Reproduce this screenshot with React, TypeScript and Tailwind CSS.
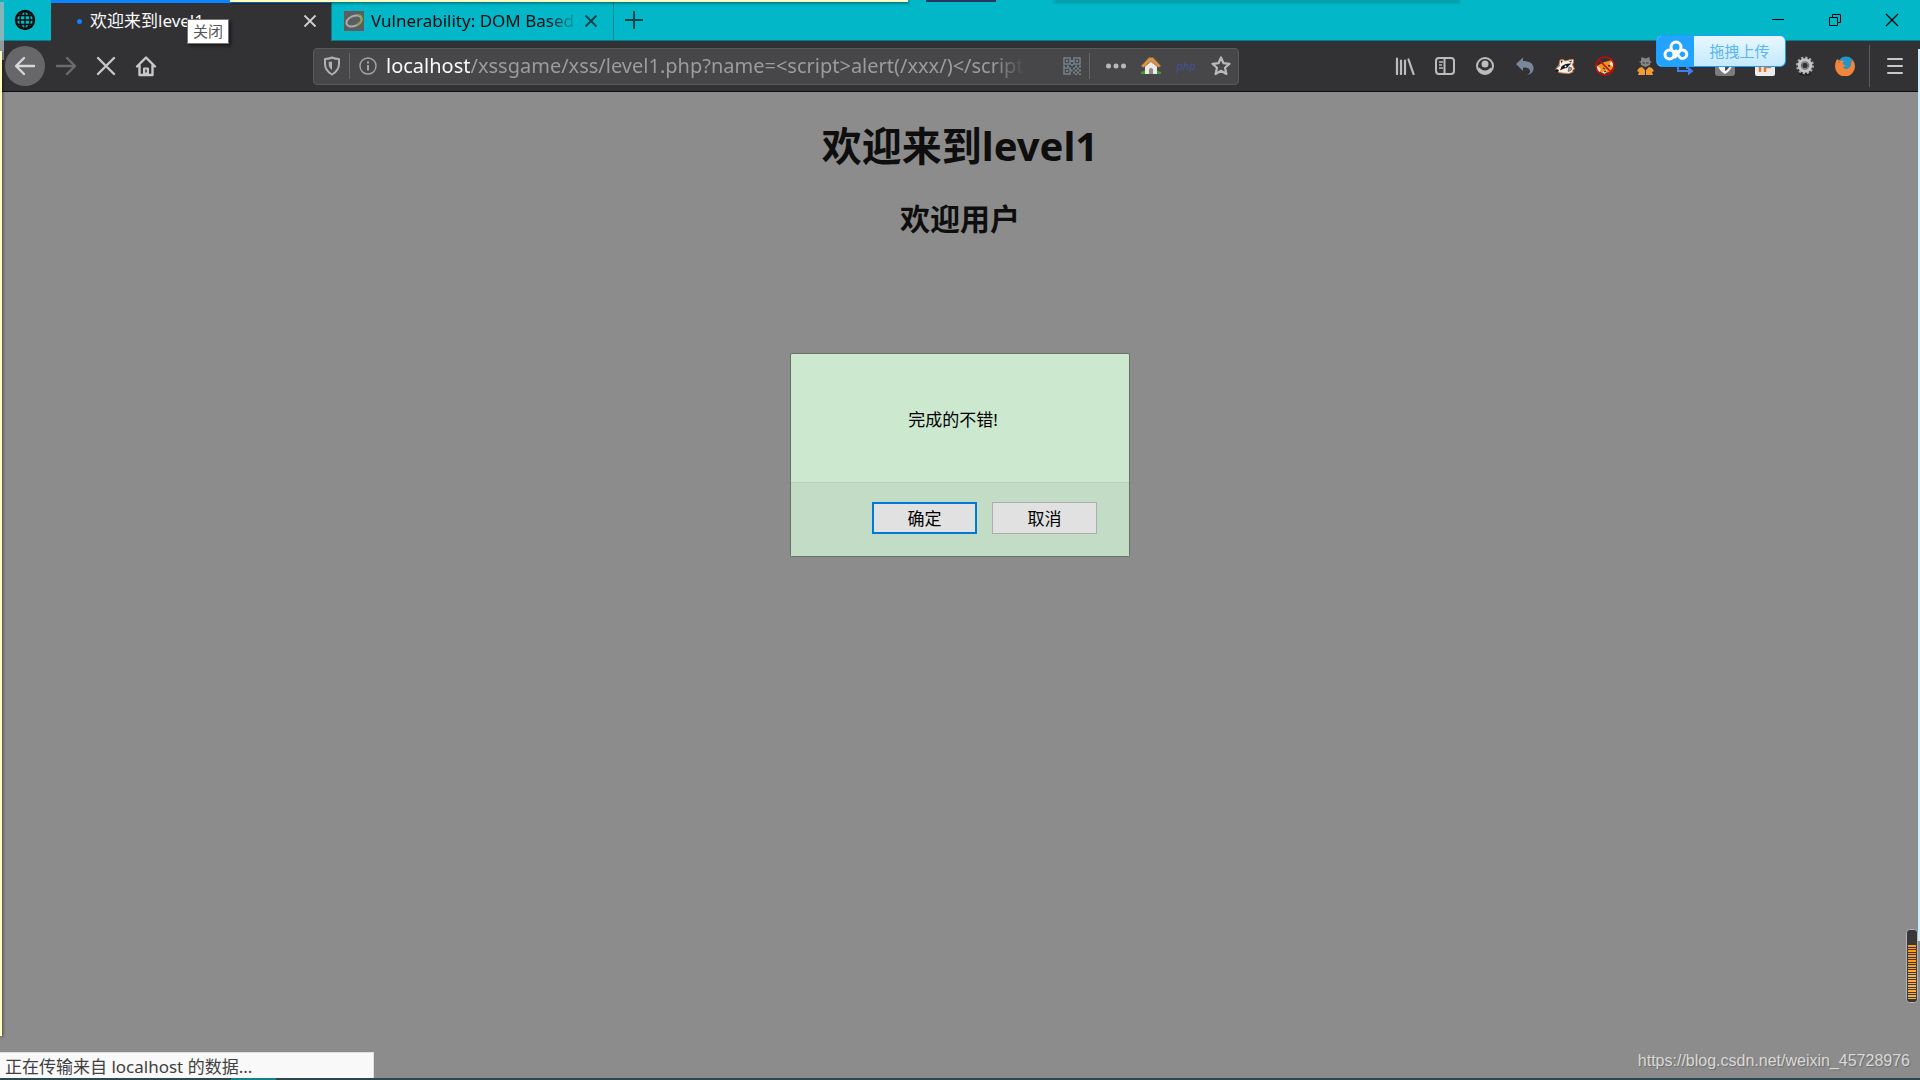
import type { ReactNode } from "react";

function GlobeIcon() {
  return (
    <svg width="22" height="22" viewBox="0 0 22 22" fill="none" stroke="#0c0c0d" strokeWidth="1.5">
      <circle cx="11" cy="11" r="9" strokeWidth="2.4" />
      <ellipse cx="11" cy="11" rx="5" ry="9" />
      <path d="M11 2v18M2 11h18M4 6.5h14M4 15.5h14" strokeWidth="1.3" />
    </svg>
  );
}

function CloseIcon({ color }: { color: string }) {
  return (
    <svg width="14" height="14" viewBox="0 0 14 14" stroke={color} strokeWidth="1.8">
      <path d="M1.5 1.5l11 11M12.5 1.5l-11 11" />
    </svg>
  );
}

function BackIcon() {
  return (
    <svg width="22" height="20" viewBox="0 0 22 20" fill="none" stroke="#d7d7d8" strokeWidth="2.4" strokeLinecap="round" strokeLinejoin="round">
      <path d="M20 10H2.5M10 2l-8 8 8 8" />
    </svg>
  );
}

function ForwardIcon() {
  return (
    <svg width="22" height="20" viewBox="0 0 22 20" fill="none" stroke="#6b6b6d" strokeWidth="2.4" strokeLinecap="round" strokeLinejoin="round">
      <path d="M2 10h17.5M12 2l8 8-8 8" />
    </svg>
  );
}

function StopIcon() {
  return (
    <svg width="20" height="20" viewBox="0 0 20 20" stroke="#c8c8c9" strokeWidth="2.4" strokeLinecap="round">
      <path d="M2 2l16 16M18 2L2 18" />
    </svg>
  );
}

function HomeIcon() {
  return (
    <svg width="22" height="22" viewBox="0 0 22 22" fill="none" stroke="#c8c8c9" strokeWidth="2.4" strokeLinejoin="round" strokeLinecap="round">
      <path d="M2 11.5L11 2.5l9 9M4.5 10v10h13V10" />
      <path d="M8.5 20v-7h5v7z" fill="#c8c8c9" strokeWidth="1" />
      <path d="M11 15v2" stroke="#323234" strokeWidth="1.5" />
    </svg>
  );
}

function ShieldIcon() {
  return (
    <svg width="18" height="20" viewBox="0 0 18 20" fill="none" stroke="#b1b1b3" strokeWidth="2">
      <path d="M2 3c3 0 5-.5 7-1.5C11 2.500 13 3 16 3v5c0 5-2.500 8-7 10.500C4.500 16 2 13 2 8z" strokeLinejoin="round" />
      <path d="M9 5.500v8.500c-2.200-1.500-3.300-3.500-3.300-6V6z" fill="#b1b1b3" stroke="none" />
    </svg>
  );
}

function InfoIcon() {
  return (
    <svg width="18" height="18" viewBox="0 0 18 18" fill="none" stroke="#a5a5a7" strokeWidth="1.4">
      <circle cx="9" cy="9" r="8" />
      <path d="M9 8v5.500M9 4.500v2" strokeWidth="2" />
    </svg>
  );
}

function QrIcon() {
  return (
    <svg width="18" height="18" viewBox="0 0 18 18" fill="none" stroke="#75818c" strokeWidth="1.5">
      <path d="M1 1h6v6H1zM11 1h6v6h-6zM1 11h6v6H1z" />
      <path d="M3 3h2v2H3zM13 3h2v2h-2zM3 13h2v2H3z" fill="#75818c" stroke="none" />
      <path
        d="M8 3h2v2H8zM8 7h2v2H8zM0 8.500h2v1.500H0zM4 8.500h2v1.500H4zM12 8.500h2v2h-2zM16 8.500h2v2h-2zM10 10.500h2v2h-2zM14 10.500h2v2h-2zM12 12.500h2v2h-2zM16 12.500h2v2h-2zM10 14.500h2v2h-2zM14 14.500h2v2h-2zM8 12.500h1.500v2H8zM12 16.500h2V18h-2zM16 16.500h2V18h-2z"
        fill="#75818c"
        stroke="none"
      />
    </svg>
  );
}

function HouseIcon() {
  return (
    <svg width="20" height="20" viewBox="0 0 20 20">
      <path d="M0 16q5-3 10-1 5-2 10 1v2H0z" fill="#3f9b35" />
      <path d="M4 9l6-5 6 5v9H4z" fill="#eceae6" />
      <path d="M8 18v-5q2-2 4 0v5z" fill="#8d8a86" />
      <path d="M0 10L8 1.500h4L20 10l-2.500 1.500L10 5.500l-7.500 6z" fill="#d1954b" stroke="#96602b" strokeWidth=".7" />
    </svg>
  );
}

function StarIcon() {
  return (
    <svg width="20" height="20" viewBox="0 0 20 20" fill="none" stroke="#b9b9bb" strokeWidth="2.200" strokeLinejoin="round">
      <path d="M10 1.500l2.500 5.700 6 .6-4.500 4 1.400 6.200L10 14.800 4.600 18 6 11.800l-4.500-4 6-.6z" />
    </svg>
  );
}

function LibraryIcon() {
  return (
    <svg width="20" height="18" viewBox="0 0 20 18" stroke="#bcbcbd" strokeWidth="2.200" strokeLinecap="round">
      <path d="M2 1.500v15.500M6 3.500v13.500M10 3.500v13.500M13.500 2.500L18.500 17" />
    </svg>
  );
}

function SidebarIcon() {
  return (
    <svg width="20" height="18" viewBox="0 0 20 18" fill="none" stroke="#bcbcbd" strokeWidth="2">
      <rect x="1" y="1" width="18" height="16" rx="3" />
      <path d="M9.500 1v16" />
      <path d="M4 5h4M4 8h3M4 11h4" strokeWidth="1.300" />
    </svg>
  );
}

function AccountIcon() {
  return (
    <svg width="18" height="18" viewBox="0 0 18 18" fill="none" stroke="#bcbcbd">
      <circle cx="9" cy="9" r="8" strokeWidth="2" />
      <circle cx="9" cy="7" r="3.500" fill="#bcbcbd" stroke="none" />
      <path d="M2 10.500q2 0 3 1.500 4 3 8 0 1-1.500 3-1.500-1 6-7 6.500-6-.5-7-6.500z" fill="#bcbcbd" stroke="none" />
    </svg>
  );
}

function UndoIcon() {
  return (
    <svg width="18" height="18" viewBox="0 0 18 18">
      <path d="M0 7l7-6.500V4c7 0 11 3 10.500 8-.5 3.500-3 5.500-6.500 6 2.500-1.500 3.500-3 3-4.500-.6-2.300-3-3.300-7-3v3.500z" fill="#78889a" />
    </svg>
  );
}

function BadgerIcon() {
  return (
    <svg width="20" height="16" viewBox="0 0 20 16">
      <path d="M.5 11.500L4 7l1-5 3-.5L10 3l6-1.500 2.500 0V4l-1 3 2 4-2 1.500.5 1.500-4 1.500-7-.5-3-.5z" fill="#f3f1ee" stroke="#d2793a" strokeWidth="1" />
      <path d="M6.500 8.500Q10 5 16.500 5.500L14 7.500l-1.500 2-4 1.200L5 12.500z" fill="#18181a" />
      <path d="M6 2.500L8 3 6 5.500zM17 2.500l-1 2-2-1z" fill="#2b2624" />
      <path d="M14 9l3 1-1 2.500-3 1zM3 9.500L5 7" fill="#9d958f" stroke="#4c4641" strokeWidth=".6" />
      <circle cx="10.500" cy="8.300" r=".9" fill="#fff" />
      <ellipse cx="2" cy="12.500" rx="1.700" ry="1.300" fill="#111" />
    </svg>
  );
}

function FoxBlockIcon() {
  return (
    <svg width="20" height="20" viewBox="0 0 20 20">
      <path d="M2 10l6-3.500L17 4l1.500 7-4 5-6 1.500L3 15z" fill="#ef931b" />
      <path d="M1 9l5 4-2 4-3-3zM17.500 4l-3 4 4 3zM7 16l5-2-2 4z" fill="#f4eee7" />
      <path d="M8 12l2 1M13 10l2-.5M9 16l2-1" stroke="#432611" strokeWidth="1.300" />
      <circle cx="10" cy="10" r="9" fill="none" stroke="#c50b0b" strokeWidth="1.600" />
      <path d="M3.500 3.500l13 13" stroke="#c50b0b" strokeWidth="1.600" />
    </svg>
  );
}

function SpyIcon() {
  return (
    <svg width="17" height="18" viewBox="0 0 17 18">
      <path d="M4.500 0L8.500 1.500 12.500 0l.5 4 2 1-2 1v2L8.500 10 4 8V6L2 5l2-1z" fill="#858585" />
      <path d="M5.500 6h2.500M9 6h2.500" stroke="#343434" strokeWidth="1.200" />
      <path d="M2 11l3-1 3 3v5H1l1-3-2-1zM15 11l-3-1-3 3v5h7l-1-3 2-1z" fill="#f29b30" />
    </svg>
  );
}

function RedirectIcon() {
  return (
    <svg width="18" height="18" viewBox="0 0 18 18" fill="none" stroke="#3f7ff0" strokeWidth="2">
      <path d="M2 3v11h11M2 4h9v8" />
      <path d="M12 9.500l5.500 4.500-5.500 4.500z" fill="#3f7ff0" stroke="none" />
    </svg>
  );
}

function ShieldBadgeIcon() {
  return (
    <svg width="20" height="20" viewBox="0 0 20 20">
      <rect width="20" height="20" rx="3" fill="#7c7c7c" />
      <path d="M3 3h14v6q-1 6-7 9-6-3-7-9z" fill="#f5f5f5" />
      <path d="M10 5h5v4q-1 4-5 6z" fill="#4b4b4b" />
    </svg>
  );
}

function IpIcon() {
  return (
    <svg width="20" height="20" viewBox="0 0 20 20">
      <rect width="20" height="20" rx="2" fill="#ececec" />
      <path d="M5 5v11M10 16V6h5v5h-5" fill="none" stroke="#ee7623" strokeWidth="2.500" />
    </svg>
  );
}

function GearIcon() {
  return (
    <svg width="20" height="20" viewBox="0 0 20 20">
      <ellipse cx="10" cy="18" rx="6" ry="1.500" fill="#1c1c1d" />
      <circle cx="10" cy="9.500" r="7.700" fill="none" stroke="#aaa" strokeWidth="2.600" strokeDasharray="2.200 1.830" />
      <circle cx="10" cy="9.500" r="5" fill="none" stroke="#c4c4c4" strokeWidth="4.500" />
      <circle cx="10" cy="9.500" r="3.600" fill="none" stroke="#6c6c6c" strokeWidth="1.200" />
    </svg>
  );
}

function FirefoxIcon() {
  return (
    <svg width="20" height="20" viewBox="0 0 20 20">
      <circle cx="11" cy="9" r="8.500" fill="#2295c9" />
      <path d="M2 3l3 2q2-1 4 0L7.500 8l3 1.500L8 11.500q2 2.500 5 1 4-2 3-6l1-3q3 3 3 7a10 10 0 01-20 0q0-4 2-7.500z" fill="#f2853b" />
      <path d="M17 4l-1 3M3 5l2 2" stroke="#d86427" />
    </svg>
  );
}

function CloudIcon() {
  return (
    <svg width="26" height="22" viewBox="0 0 26 22" fill="none" stroke="#fff" strokeWidth="3">
      <circle cx="13" cy="7" r="5" />
      <circle cx="6.500" cy="14.500" r="4.500" />
      <path d="M13 11q3 7.500 6.500 7.500a4.200 4.200 0 10-3.500-6.500l-4 5" strokeLinecap="round" />
    </svg>
  );
}

const extensions: { label: string; icon: ReactNode }[] = [
  { label: "Library", icon: <LibraryIcon /> },
  { label: "Sidebars", icon: <SidebarIcon /> },
  { label: "Account", icon: <AccountIcon /> },
  { label: "Undo", icon: <UndoIcon /> },
  { label: "Privacy Badger", icon: <BadgerIcon /> },
  { label: "Proxy", icon: <FoxBlockIcon /> },
  { label: "User agent", icon: <SpyIcon /> },
  { label: "Redirect", icon: <RedirectIcon /> },
  { label: "Shield", icon: <ShieldBadgeIcon /> },
  { label: "IP", icon: <IpIcon /> },
  { label: "Settings", icon: <GearIcon /> },
  { label: "Firefox", icon: <FirefoxIcon /> },
];

function ToolButton({ label, children }: { label: string; children: ReactNode }) {
  return (
    <button aria-label={label} className="flex h-10 w-10 shrink-0 items-center justify-center">
      {children}
    </button>
  );
}

function TabBar() {
  return (
    <div className="flex h-[41px] bg-[#02b7c7] text-[17px]">
      <button aria-label="Containers" className="flex w-[51px] items-center justify-center border-b border-[#087f89] pr-[2px]">
        <GlobeIcon />
      </button>

      {/* Active tab */}
      <div className="flex w-[280px] items-center border-t-3 border-[#0a84ff] bg-[#323234] pr-[10px] pb-[2px] pl-[26px] text-[#f9f9fa]">
        <span className="h-[5px] w-[5px] rounded-full bg-[#0a84ff]" />
        <a href="#level1" className="ml-2 flex-1 truncate">欢迎来到level1</a>
        <button aria-label="Close tab" className="p-1"><CloseIcon color="#cfcfd0" /></button>
      </div>

      <div className="flex w-[283px] items-center border-x border-b border-[#087f89] pt-[2px] pr-[11px] pl-3">
        <svg width="20" height="20" viewBox="0 0 20 20" className="shrink-0">
          <rect width="20" height="20" fill="#5b5e60" />
          <ellipse cx="10" cy="10" rx="8" ry="5" transform="rotate(-22 10 10)" fill="none" stroke="#a9adab" strokeWidth="2" />
          <path d="M14 4q4 0 4 4-1 4-5 6" fill="none" stroke="#83a33a" strokeWidth="1.500" />
        </svg>
        <a
          href="#dom"
          className="ml-[7px] w-[208px] overflow-hidden whitespace-nowrap text-[#0c0c0d] [mask-image:linear-gradient(to_right,black_85%,transparent)]"
        >
          Vulnerability: DOM Based
        </a>
        <button aria-label="Close tab" className="ml-auto p-1"><CloseIcon color="#064349" /></button>
      </div>

      <div className="flex flex-1 items-center border-b border-[#087f89]">
        <button aria-label="New tab" className="px-[11px]">
          <svg width="18" height="18" viewBox="0 0 18 18" stroke="#064349" strokeWidth="2">
            <path d="M9 0v18M0 9h18" />
          </svg>
        </button>
        <div className="ml-auto flex self-stretch">
          <button aria-label="Minimize" className="flex w-[57px] items-center justify-center">
            <svg width="12" height="12" viewBox="0 0 12 12" stroke="#000"><path d="M0 5.500h12" /></svg>
          </button>
          <button aria-label="Restore" className="flex w-[57px] items-center justify-center">
            <svg width="12" height="12" viewBox="0 0 12 12" fill="none" stroke="#000">
              <path d="M.5 3.500h8v8h-8zM3.500 3.500v-3h8v8h-3" />
            </svg>
          </button>
          <button aria-label="Close" className="flex w-[57px] items-center justify-center">
            <svg width="14" height="14" viewBox="0 0 14 14" stroke="#000" strokeWidth="1.200"><path d="M1 1l12 12M13 1L1 13" /></svg>
          </button>
        </div>
      </div>
    </div>
  );
}

function AddressBar() {
  return (
    <div className="mr-[146px] ml-[147px] flex h-[37px] min-w-0 flex-1 items-center rounded-sm border border-[#59595b] bg-[#474749]">
      <button aria-label="Tracking protection" className="flex w-[35px] justify-center"><ShieldIcon /></button>
      <span className="h-[26px] w-px bg-[#66666a]" />
      <button aria-label="Site information" className="flex w-[36px] justify-center"><InfoIcon /></button>
      <div className="flex min-w-0 flex-1 text-[20px] [mask-image:linear-gradient(to_right,black_95%,transparent)]">
        <label htmlFor="url" className="text-[#f9f9fa]">localhost</label>
        <input
          id="url"
          defaultValue="/xssgame/xss/level1.php?name=<script>alert(/xxx/)</script>"
          className="min-w-0 flex-1 bg-transparent text-[#9c9c9e] outline-none"
        />
      </div>
      <button aria-label="QR code" className="mr-2 ml-[38px]"><QrIcon /></button>
      <span className="h-[26px] w-px bg-[#66666a]" />
      <div className="flex items-center pl-2">
        <button aria-label="Page actions" className="flex w-9 justify-center">
          <svg width="20" height="6" viewBox="0 0 20 6" fill="#b9b9bb">
            <circle cx="2.500" cy="3" r="2.500" />
            <circle cx="10" cy="3" r="2.500" />
            <circle cx="17.500" cy="3" r="2.500" />
          </svg>
        </button>
        <button aria-label="Home site" className="flex w-[34px] justify-center"><HouseIcon /></button>
        <button className="w-9 text-center text-[11px] text-[#43539a] italic">php</button>
        <button aria-label="Bookmark" className="flex w-[34px] justify-center"><StarIcon /></button>
      </div>
    </div>
  );
}

function Toolbar() {
  return (
    <div className="flex h-[51px] items-center border-b border-[#0c0c0d] bg-[#323234] pl-[5px]">
      <button aria-label="Back" className="mr-px flex h-10 w-10 shrink-0 items-center justify-center rounded-full bg-[#676769]">
        <BackIcon />
      </button>
      <ToolButton label="Forward"><ForwardIcon /></ToolButton>
      <ToolButton label="Stop"><StopIcon /></ToolButton>
      <ToolButton label="Home"><HomeIcon /></ToolButton>
      <AddressBar />
      {extensions.map((item) => (
        <ToolButton key={item.label} label={item.label}>{item.icon}</ToolButton>
      ))}
      <span className="ml-1 h-[42px] w-px bg-[#5b5b5d]" />
      <button aria-label="Menu" className="flex w-[50px] justify-center">
        <svg width="16" height="16" viewBox="0 0 16 16" stroke="#c8c8c9" strokeWidth="2" strokeLinecap="round">
          <path d="M1 1h14M1 8h14M1 15h14" />
        </svg>
      </button>
    </div>
  );
}

function AlertDialog() {
  return (
    <div role="dialog" aria-labelledby="message" className="mt-[114px] w-[340px] rounded-xs border border-[#68706a] bg-[#cce8cf] text-[17px] text-black">
      <p id="message" className="pt-[53px] pr-[14px] pb-[50px] text-center leading-[25px]">完成的不错!</p>
      <div className="flex justify-end gap-[15px] border-t border-[#b7d0ba] bg-[#c2dcc5] pt-[19px] pr-8 pb-[22px]">
        <button className="h-8 w-[105px] border-2 border-[#0078d7] bg-[#e1e1e1] leading-none">确定</button>
        <button className="h-8 w-[105px] border border-[#adadad] bg-[#e1e1e1] leading-none">取消</button>
      </div>
    </div>
  );
}

// Edges of other windows and floating widgets that lie over the browser
function Overlays() {
  return (
    <>
      <div className="absolute top-0 left-[230px] h-[2px] w-[678px] bg-[#ffffc0] shadow-[1px_1px_3px_#00000090]" />
      <div className="absolute top-0 left-[926px] h-[2px] w-[70px] bg-[#27385a]" />
      <div className="absolute top-0 left-[1054px] h-[3px] w-[406px] bg-[#029aa5] blur-[1px]" />
      <div className="absolute top-[2px] left-0 h-[58px] w-1 bg-[#a5b4b8]/80" />
      <div className="absolute top-[51px] left-0 h-[985px] w-[2px] bg-[#ffffc0] shadow-[1px_1px_3px_#00000090]" />
      <div className="absolute top-[49px] right-0 h-[892px] w-[2px] bg-[#cceeff]" />

      <div className="absolute top-[19px] left-[187px] border border-[#767676] bg-white px-[5px] text-[15px] leading-[23px] text-[#575757] shadow-[2px_2px_3px_#00000080]">
        关闭
      </div>

      <button className="absolute top-[35px] right-[134px] flex h-8 w-[130px] items-center overflow-hidden rounded-md border border-[#1e9fff] bg-linear-to-b from-[#e8f7ff] to-[#c3eaff] text-[15px] text-[#5bb5f3]">
        <span className="flex h-full w-[37px] items-center justify-center bg-[#22a3ff]"><CloudIcon /></span>
        <span className="flex-1 text-center">拖拽上传</span>
      </button>

      <svg width="12" height="74" viewBox="0 0 12 74" className="absolute right-[2px] bottom-[77px]">
        <rect x=".5" y=".5" width="11" height="73" rx="3" fill="#383838" stroke="#b5b5b5" />
        <path d="M6 16v26" stroke="#ff9a18" strokeWidth="8" strokeDasharray="2 1 1 1" />
        <path d="M6 41v29" stroke="#ffae3c" strokeWidth="8" strokeDasharray="2 1 1 1" />
      </svg>
    </>
  );
}

export default function App() {
  return (
    <div className="relative flex min-h-screen flex-col overflow-hidden bg-[#8c8c8c] font-['Noto_Sans','Noto_Sans_CJK_SC',sans-serif]">
      <header>
        <TabBar />
        <Toolbar />
      </header>

      <main className="flex flex-1 flex-col items-center text-[#0e0e0e]">
        <h1 className="mt-[27px] text-[40px] leading-[54px] font-bold">欢迎来到level1</h1>
        <h2 className="mt-[26px] text-[30px] leading-[40px] font-bold">欢迎用户</h2>
        <AlertDialog />
      </main>

      <footer className="flex items-end justify-between">
        <p className="h-[26px] w-[374px] border-t border-r border-[#e0e0e0] bg-[#f9f9fa] pl-[5px] text-[17px] leading-[28px] text-[#3f3f41]">
          正在传输来自 localhost 的数据...
        </p>
        <a
          href="https://blog.csdn.net/weixin_45728976"
          className="mr-[10px] mb-[5px] font-['Liberation_Sans',sans-serif] text-[16px] text-[#d9d9d9] [text-shadow:1px_1px_1px_#6b6b6b]"
        >
          https://blog.csdn.net/weixin_45728976
        </a>
      </footer>
      <div className="flex h-[2px] bg-[#29494f]">
        <span className="ml-[231px] w-[45px] bg-[#168087]" />
      </div>

      <Overlays />
    </div>
  );
}
